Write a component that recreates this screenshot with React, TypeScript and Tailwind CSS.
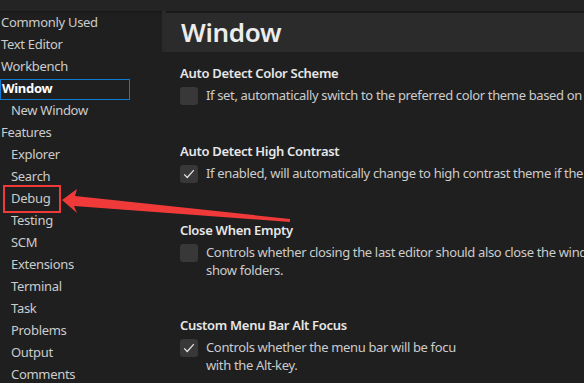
import React from "react";

const font = { fontFamily: '"Segoe UI", "Noto Sans", "Open Sans", sans-serif' };

type NavItem = { label: string; child?: boolean; active?: boolean; marked?: boolean };

const nav: NavItem[] = [
  { label: "Commonly Used" },
  { label: "Text Editor" },
  { label: "Workbench" },
  { label: "Window", active: true },
  { label: "New Window", child: true },
  { label: "Features" },
  { label: "Explorer", child: true },
  { label: "Search", child: true },
  { label: "Debug", child: true, marked: true },
  { label: "Testing", child: true },
  { label: "SCM", child: true },
  { label: "Extensions", child: true },
  { label: "Terminal", child: true },
  { label: "Task", child: true },
  { label: "Problems", child: true },
  { label: "Output", child: true },
  { label: "Comments", child: true },
];

function Check() {
  return (
    <svg viewBox="0 0 16 16" className="h-[14px] w-[14px]" fill="none">
      <path d="M2.5 8.5 L6 12 L13.5 3.5" stroke="#e6e6e6" strokeWidth="1.4" />
    </svg>
  );
}

function Setting({
  title,
  lines,
  checked,
  gap,
}: {
  title: string;
  lines: string[];
  checked?: boolean;
  gap: string;
}) {
  return (
    <div className={gap}>
      <div className="text-[13px] font-semibold leading-[18px] tracking-[-0.3px] text-[#e7e7e7]">{title}</div>
      <div className="mt-[4px] flex gap-[8px]">
        <div className="mt-[1px] flex h-[18px] w-[18px] shrink-0 items-center justify-center rounded-[3px] bg-[#383838]">
          {checked && <Check />}
        </div>
        <div className="min-w-0 overflow-hidden text-[13px] leading-[18px] tracking-[-0.35px] text-[#cccccc]">
          {lines.map((l) => (
            <div key={l} className="whitespace-nowrap">
              {l}
            </div>
          ))}
        </div>
      </div>
    </div>
  );
}

export default function App() {
  return (
    <div className="relative h-[383px] w-[584px] overflow-hidden bg-[#1f1f1f]" style={font}>
      <div className="h-[11px] bg-[#242424] shadow-[0_1px_2px_#161616]" />
      <div className="flex">
        <div className="relative w-[166px] shrink-0 pt-[1px]">
          <div className="absolute right-0 top-0 h-[41px] w-[4px] bg-[#2a2a2a]" />
          {nav.map((n) => (
            <div key={n.label} className="flex h-[22px] items-center tracking-[-0.3px]">
              <div
                className={
                  n.active
                    ? "flex h-[21px] w-[130px] items-center border border-[#0e7ad3] pl-[1px] text-[13px] font-bold text-white"
                    : n.marked
                      ? "ml-[3px] flex h-[28px] w-[58px] items-center border-2 border-[#f03a3a] pl-[6px] text-[13px] text-[#cccccc]"
                      : n.child
                        ? "pl-[11px] text-[13px] text-[#cccccc]"
                        : "pl-[1px] text-[13px] text-[#cccccc]"
                }
              >
                {n.label}
              </div>
            </div>
          ))}
        </div>
        <div className="min-w-0 flex-1">
          <div className="mt-[2px] flex h-[39px] items-center bg-[#2b2b2b] pl-[15px] text-[26px] font-semibold tracking-[-0.3px] text-[#ececec]">
            Window
          </div>
          <div className="pl-[14px]">
            <Setting
              gap="mt-[12px]"
              title="Auto Detect Color Scheme"
              lines={["If set, automatically switch to the preferred color theme based on"]}
            />
            <Setting
              gap="mt-[37px]"
              title="Auto Detect High Contrast"
              checked
              lines={["If enabled, will automatically change to high contrast theme if the"]}
            />
            <Setting
              gap="mt-[38px]"
              title="Close When Empty"
              lines={["Controls whether closing the last editor should also close the wind", "show folders."]}
            />
            <Setting
              gap="mt-[37px]"
              title="Custom Menu Bar Alt Focus"
              checked
              lines={["Controls whether the menu bar will be focu", "with the Alt-key."]}
            />
          </div>
        </div>
      </div>
      <svg className="pointer-events-none absolute left-0 top-0" width="584" height="383">
        <polygon
          points="62,200 77,189 75,196 290,219 290,222 74,206 77,213"
          fill="#f03a3a"
        />
      </svg>
    </div>
  );
}
